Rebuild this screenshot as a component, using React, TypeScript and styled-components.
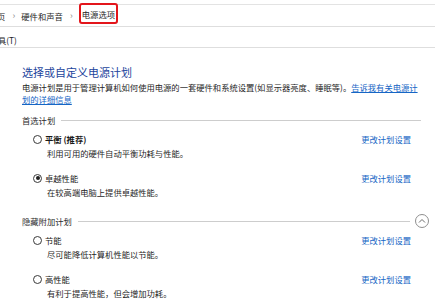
import styled, { createGlobalStyle } from 'styled-components';

const GlobalStyle = createGlobalStyle`
  html, body {
    margin: 0;
    padding: 0;
    background: #ffffff;
  }
  body {
    font-family: "Noto Sans CJK SC", "Noto Sans", sans-serif;
    color: #1f1f1f;
    overflow: hidden;
  }
`;

type Plan = {
  name: string;
  desc: string;
  selected?: boolean;
  bold?: boolean;
};

const preferred: Plan[] = [
  { name: '平衡 (推荐)', desc: '利用可用的硬件自动平衡功耗与性能。', bold: true },
  { name: '卓越性能', desc: '在较高端电脑上提供卓越性能。', selected: true },
];

const hidden: Plan[] = [
  { name: '节能', desc: '尽可能降低计算机性能以节能。' },
  { name: '高性能', desc: '有利于提高性能，但会增加功耗。' },
];

function PlanRow({ plan }: { plan: Plan }) {
  return (
    <Row>
      <Radio $checked={!!plan.selected} />
      <PlanName $bold={!!plan.bold}>{plan.name}</PlanName>
      <Link href="#">更改计划设置</Link>
      <PlanDesc>{plan.desc}</PlanDesc>
    </Row>
  );
}

export default function App() {
  return (
    <Page>
      <GlobalStyle />
      <CrumbBar>
        <Crumb $clip>页</Crumb>
        <Sep>›</Sep>
        <Crumb>硬件和声音</Crumb>
        <Sep>›</Sep>
        <Highlight>电源选项</Highlight>
      </CrumbBar>
      <MenuBar>
        <MenuItem>具(T)</MenuItem>
      </MenuBar>
      <Content>
        <Title>选择或自定义电源计划</Title>
        <Intro>
          电源计划是用于管理计算机如何使用电源的一套硬件和系统设置(如显示器亮度、睡眠等)。
          <Link href="#">
            告诉我有关电源计
            <br />
            划的详细信息
          </Link>
        </Intro>

        <Section $gap={8}>
          <Header>
            <HeaderLabel>首选计划</HeaderLabel>
            <Rule $trail={4} />
          </Header>
          <Rows>
            {preferred.map((p) => (
              <PlanRow key={p.name} plan={p} />
            ))}
          </Rows>
        </Section>

        <Section $gap={16}>
          <Header>
            <HeaderLabel>隐藏附加计划</HeaderLabel>
            <Rule $trail={3} />
            <Collapse>
              <svg width="8" height="6" viewBox="0 0 8 6">
                <path d="M1 4.5 L4 1.5 L7 4.5" fill="none" stroke="#6b6b6b" strokeWidth="1" />
              </svg>
            </Collapse>
          </Header>
          <Rows>
            {hidden.map((p) => (
              <PlanRow key={p.name} plan={p} />
            ))}
          </Rows>
        </Section>
      </Content>
    </Page>
  );
}

const Page = styled.div`
  width: 435px;
  height: 306px;
  overflow: hidden;
  font-size: 8.3px;
  line-height: 12px;
`;

const CrumbBar = styled.div`
  display: flex;
  align-items: center;
  margin-top: 4px;
  height: 21px;
  border-top: 1px solid #e3e3e3;
  border-bottom: 1px solid #dedede;
  color: #1f1f1f;
`;

const Crumb = styled.span<{ $clip?: boolean }>`
  margin-left: ${({ $clip }) => ($clip ? '-3px' : '0')};
`;

const Sep = styled.span`
  width: 15px;
  text-align: center;
  color: #8a8a8a;
  font-size: 9px;
  margin: 0 0 0 1px;
`;

const Highlight = styled.span`
  align-self: flex-start;
  margin-top: -2px;
  height: 17px;
  padding: 0 1px;
  display: flex;
  align-items: center;
  border: 2px solid #e3151b;
  border-radius: 3px;
  margin-left: 0;
`;

const MenuBar = styled.div`
  box-sizing: border-box;
  height: 21px;
  padding-top: 7px;
  border-bottom: 1px solid #dedede;
`;

const MenuItem = styled.span`
  display: inline-block;
  margin-left: -2px;
`;

const Content = styled.div`
  padding: 0 10px 0 22px;
`;

const Title = styled.h1`
  margin: 16px 0 0;
  font-size: 11px;
  line-height: 16px;
  font-weight: 400;
  color: #1c449c;
`;

const Intro = styled.p`
  margin: 1px 0 0;
  width: 402px;
  color: #1f1f1f;
`;

const Link = styled.a`
  color: #1666c5;
  text-decoration: none;
  ${Intro} & {
    text-decoration: underline;
  }
`;

const Section = styled.section<{ $gap: number }>`
  margin-top: ${({ $gap }) => $gap}px;
`;

const Header = styled.div`
  display: flex;
  align-items: center;
  height: 14px;
  gap: 6px;
`;

const HeaderLabel = styled.span`
  color: #2b2b2b;
`;

const Rule = styled.div<{ $trail: number }>`
  flex: 1;
  height: 1px;
  margin-right: ${({ $trail }) => $trail}px;
  background: #cdcdcd;
`;

const Collapse = styled.span`
  box-sizing: border-box;
  width: 14px;
  height: 14px;
  border: 1px solid #8f8f8f;
  border-radius: 50%;
  display: flex;
  align-items: center;
  justify-content: center;
  margin-left: -4px;
  margin-right: -4px;
`;

const Rows = styled.div`
  display: flex;
  flex-direction: column;
  gap: 13px;
  margin-top: 6px;
`;

const Row = styled.div`
  display: grid;
  grid-template-columns: 9px 1fr auto;
  column-gap: 3px;
  row-gap: 2px;
  align-items: center;
  padding: 0 14px 0 11px;
`;

const Radio = styled.span<{ $checked: boolean }>`
  box-sizing: border-box;
  width: 9px;
  height: 9px;
  border: 1px solid #3a3a3a;
  border-radius: 50%;
  display: flex;
  align-items: center;
  justify-content: center;
  &::after {
    content: '';
    display: ${({ $checked }) => ($checked ? 'block' : 'none')};
    width: 4px;
    height: 4px;
    border-radius: 50%;
    background: #1f1f1f;
  }
`;

const PlanName = styled.span<{ $bold: boolean }>`
  font-weight: ${({ $bold }) => ($bold ? 700 : 400)};
  color: #1a1a1a;
`;

const PlanDesc = styled.span`
  grid-column: 2 / 4;
  padding-left: 2px;
  color: #1f1f1f;
`;
